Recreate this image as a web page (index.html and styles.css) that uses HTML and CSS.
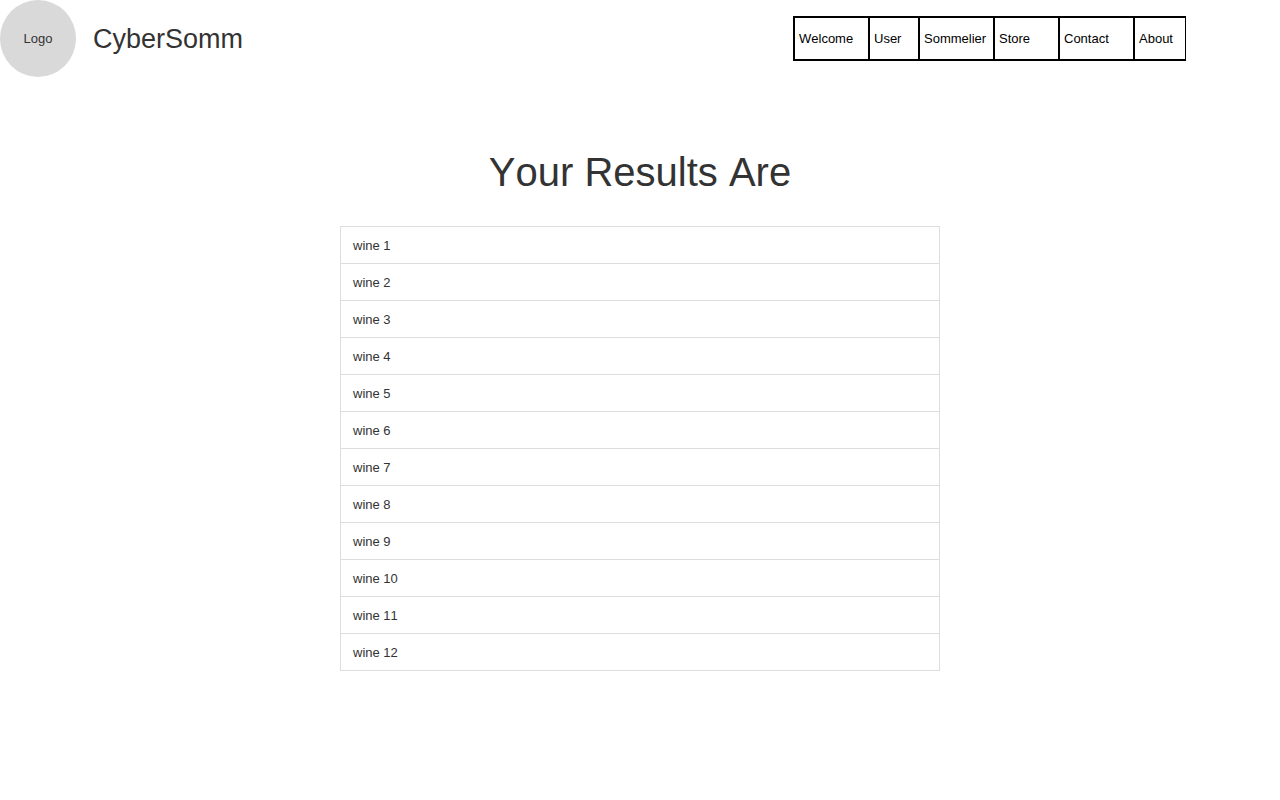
FILE: index.html
```html
<!DOCTYPE html>
<html lang="en">
<head>
<meta charset="utf-8">
<title>CyberSomm</title>
<link rel="stylesheet" href="styles.css">
</head>
<body>
<header class="header">
  <div class="brand">
    <div class="logo">Logo</div>
    <div class="brand-name">CyberSomm</div>
  </div>
  <nav class="nav">
    <a class="nav-link wide" href="#">Welcome</a>
    <a class="nav-link narrow" href="#">User</a>
    <a class="nav-link wide" href="#">Sommelier</a>
    <a class="nav-link medium" href="#">Store</a>
    <a class="nav-link wide" href="#">Contact</a>
    <a class="nav-link last" href="#">About</a>
  </nav>
</header>
<main class="main">
  <h1 class="title">Your Results Are</h1>
  <ul class="results">
    <li class="result">wine 1</li>
    <li class="result">wine 2</li>
    <li class="result">wine 3</li>
    <li class="result">wine 4</li>
    <li class="result">wine 5</li>
    <li class="result">wine 6</li>
    <li class="result">wine 7</li>
    <li class="result">wine 8</li>
    <li class="result">wine 9</li>
    <li class="result">wine 10</li>
    <li class="result">wine 11</li>
    <li class="result">wine 12</li>
  </ul>
</main>
</body>
</html>
```
FILE: styles.css
```css
* {
  box-sizing: border-box;
}

body {
  margin: 0;
  background: #fff;
  color: #333;
  font-family: "Liberation Sans", Arial, sans-serif;
  font-size: 13px;
  font-kerning: none;
  line-height: 16px;
}

.header {
  display: flex;
  align-items: center;
  justify-content: space-between;
  padding-right: 94px;
}

.brand {
  display: flex;
  align-items: center;
  gap: 17px;
}

.logo {
  display: flex;
  align-items: center;
  justify-content: center;
  width: 76px;
  height: 77px;
  border-radius: 50%;
  background: #d9d9d9;
}

.brand-name {
  font-size: 27px;
  line-height: 32px;
}

.nav {
  display: flex;
  border: 2px solid #000;
  border-width: 2px 1px 2px 0;
}

.nav-link {
  padding: 13px 0 12px 4px;
  border-left: 2px solid #000;
  color: #000;
  text-decoration: none;
}

.wide {
  width: 75px;
}

.medium {
  width: 65px;
}

.narrow {
  width: 50px;
}

.last {
  width: 52px;
}

.main {
  max-width: 600px;
  margin: 0 auto;
  padding-top: 71px;
}

.title {
  margin: 0 0 30px;
  font-size: 40px;
  font-weight: 400;
  line-height: 48px;
  text-align: center;
}

.results {
  margin: 0;
  padding: 0;
  border: 1px solid #ddd;
  list-style: none;
}

.result {
  padding: 11px 12px 9px;
}

.result + .result {
  border-top: 1px solid #ddd;
}
```
